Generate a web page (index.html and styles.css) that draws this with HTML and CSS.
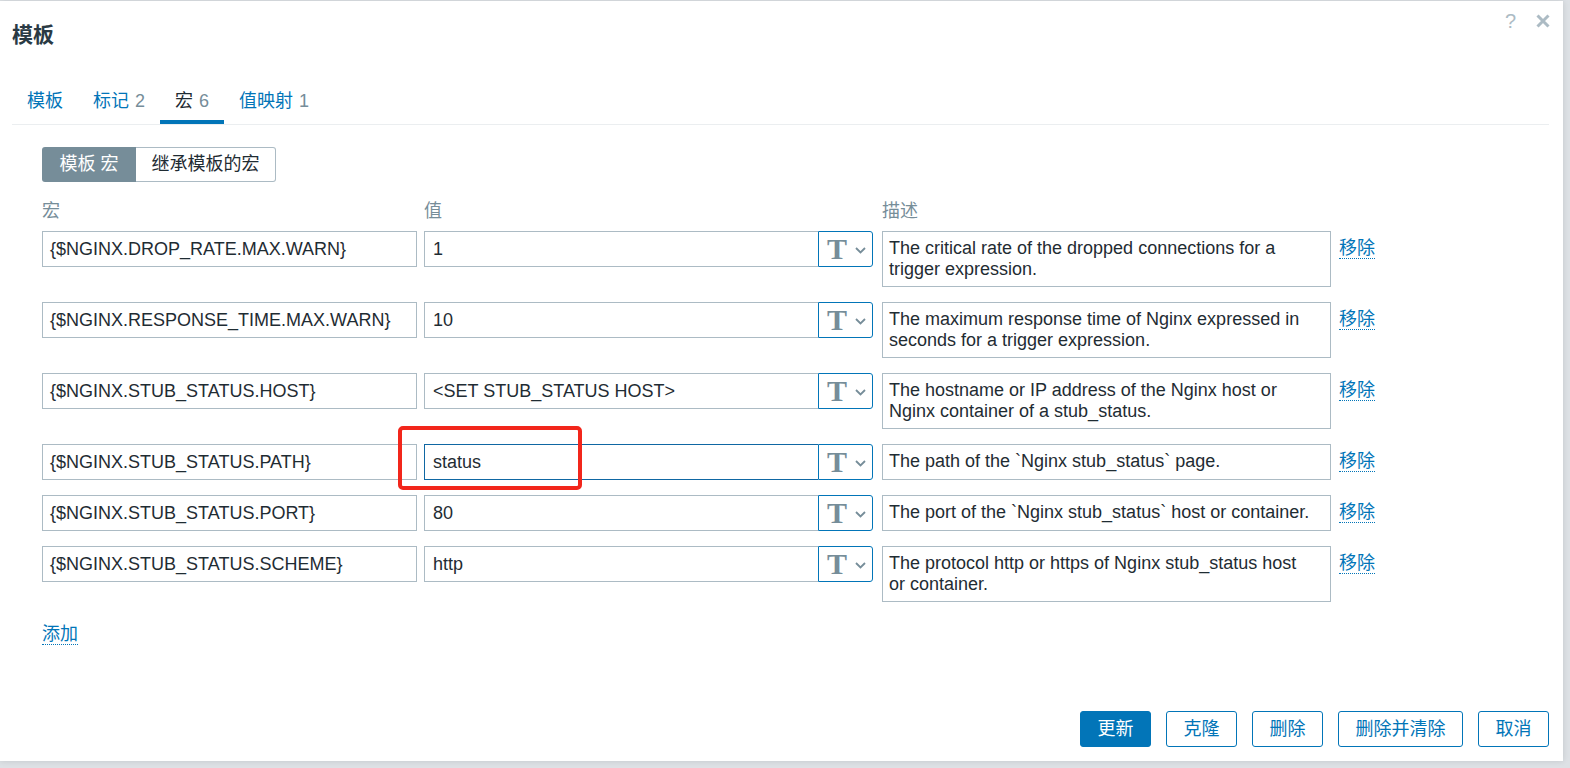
FILE: index.html
```html
<!DOCTYPE html>
<html lang="zh">
<head>
<meta charset="utf-8">
<title>模板</title>
<link rel="stylesheet" href="styles.css">
</head>
<body>
<div class="dialog">
  <div class="dlg-head">
    <h4 class="title">模板</h4>
    <div class="head-btns">
      <span class="help">?</span>
      <svg class="close" width="14" height="14" viewBox="0 0 14 14"><path d="M1.5 1.5 L12.5 12.5 M12.5 1.5 L1.5 12.5" stroke="#acbbc4" stroke-width="3" fill="none"/></svg>
    </div>
  </div>
  <div class="tabs">
    <a class="tab">模板</a>
    <a class="tab">标记 <span class="cnt">2</span></a>
    <a class="tab active">宏 <span class="cnt">6</span></a>
    <a class="tab">值映射 <span class="cnt">1</span></a>
  </div>
  <div class="content">
    <div class="seg"><span class="seg-btn on">模板 宏</span><span class="seg-btn off">继承模板的宏</span></div>
    <div class="thead">
      <div class="c-macro">宏</div>
      <div class="c-val">值</div>
      <div class="c-desc">描述</div>
    </div>

    <div class="row">
      <div class="c-macro"><div class="inp">{$NGINX.DROP_RATE.MAX.WARN}</div></div>
      <div class="c-val"><div class="inp val">1</div><div class="tbtn"><span class="tglyph">T</span><svg class="chev" width="11" height="7" viewBox="0 0 11 7"><path d="M1 1 L5.5 5.5 L10 1" stroke="#768d99" stroke-width="1.8" fill="none"/></svg></div></div>
      <div class="c-desc"><div class="desc">The critical rate of the dropped connections for a<br>trigger expression.</div></div>
      <div class="c-act"><a class="link">移除</a></div>
    </div>

    <div class="row">
      <div class="c-macro"><div class="inp">{$NGINX.RESPONSE_TIME.MAX.WARN}</div></div>
      <div class="c-val"><div class="inp val">10</div><div class="tbtn"><span class="tglyph">T</span><svg class="chev" width="11" height="7" viewBox="0 0 11 7"><path d="M1 1 L5.5 5.5 L10 1" stroke="#768d99" stroke-width="1.8" fill="none"/></svg></div></div>
      <div class="c-desc"><div class="desc">The maximum response time of Nginx expressed in<br>seconds for a trigger expression.</div></div>
      <div class="c-act"><a class="link">移除</a></div>
    </div>

    <div class="row">
      <div class="c-macro"><div class="inp">{$NGINX.STUB_STATUS.HOST}</div></div>
      <div class="c-val"><div class="inp val">&lt;SET STUB_STATUS HOST&gt;</div><div class="tbtn"><span class="tglyph">T</span><svg class="chev" width="11" height="7" viewBox="0 0 11 7"><path d="M1 1 L5.5 5.5 L10 1" stroke="#768d99" stroke-width="1.8" fill="none"/></svg></div></div>
      <div class="c-desc"><div class="desc">The hostname or IP address of the Nginx host or<br>Nginx container of a stub_status.</div></div>
      <div class="c-act"><a class="link">移除</a></div>
    </div>

    <div class="row">
      <div class="c-macro"><div class="inp">{$NGINX.STUB_STATUS.PATH}</div></div>
      <div class="c-val marked"><div class="inp val focus">status</div><div class="tbtn"><span class="tglyph">T</span><svg class="chev" width="11" height="7" viewBox="0 0 11 7"><path d="M1 1 L5.5 5.5 L10 1" stroke="#768d99" stroke-width="1.8" fill="none"/></svg></div><div class="redbox"></div></div>
      <div class="c-desc"><div class="desc">The path of the `Nginx stub_status` page.</div></div>
      <div class="c-act"><a class="link">移除</a></div>
    </div>

    <div class="row">
      <div class="c-macro"><div class="inp">{$NGINX.STUB_STATUS.PORT}</div></div>
      <div class="c-val"><div class="inp val">80</div><div class="tbtn"><span class="tglyph">T</span><svg class="chev" width="11" height="7" viewBox="0 0 11 7"><path d="M1 1 L5.5 5.5 L10 1" stroke="#768d99" stroke-width="1.8" fill="none"/></svg></div></div>
      <div class="c-desc"><div class="desc">The port of the `Nginx stub_status` host or container.</div></div>
      <div class="c-act"><a class="link">移除</a></div>
    </div>

    <div class="row last">
      <div class="c-macro"><div class="inp">{$NGINX.STUB_STATUS.SCHEME}</div></div>
      <div class="c-val"><div class="inp val">http</div><div class="tbtn"><span class="tglyph">T</span><svg class="chev" width="11" height="7" viewBox="0 0 11 7"><path d="M1 1 L5.5 5.5 L10 1" stroke="#768d99" stroke-width="1.8" fill="none"/></svg></div></div>
      <div class="c-desc"><div class="desc">The protocol http or https of Nginx stub_status host<br>or container.</div></div>
      <div class="c-act"><a class="link">移除</a></div>
    </div>

    <div class="add-wrap"><a class="link">添加</a></div>
  </div>
  <div class="footer">
    <button class="btn primary">更新</button>
    <button class="btn">克隆</button>
    <button class="btn">删除</button>
    <button class="btn">删除并清除</button>
    <button class="btn">取消</button>
  </div>
</div>
</body>
</html>
```

FILE: styles.css
```css
html, body {
  margin: 0;
  padding: 0;
}
body {
  width: 1570px;
  height: 768px;
  overflow: hidden;
  background: #dde1e5;
  font-family: "Liberation Sans", Arial, "Noto Sans CJK SC", sans-serif;
  font-size: 18px;
  color: #1f2c33;
}
.dialog {
  margin-top: 1px;
  width: 1563px;
  height: 760px;
  background: #fff;
  display: flex;
  flex-direction: column;
  box-sizing: border-box;
  box-shadow: 0 0 6px rgba(0, 0, 0, 0.12);
}
.dlg-head {
  display: flex;
  height: 79px;
  padding: 0 13px 0 12px;
  box-sizing: border-box;
}
.title {
  flex: 1;
  margin: 22px 0 0;
  font-size: 21px;
  line-height: 24px;
  font-weight: bold;
  color: #2a3a44;
}
.head-btns {
  display: flex;
  align-items: flex-start;
}
.help {
  margin-top: 10px;
  font-size: 20px;
  line-height: 20px;
  color: #acbbc4;
}
.close {
  margin-top: 13px;
  margin-left: 20px;
}
.tabs {
  display: flex;
  margin: 0 14px 0 12px;
  border-bottom: 1px solid #ebeef0;
}
.tab {
  display: block;
  padding: 11px 15px 8px;
  line-height: 21px;
  border-bottom: 4px solid transparent;
  color: #0275b8;
  cursor: pointer;
}
.tab .cnt {
  color: #768d99;
  padding-left: 1px;
}
.tab.active {
  color: #1f2c33;
  border-bottom-color: #0275b8;
}
.content {
  padding: 22px 0 0 42px;
}
.seg {
  display: flex;
  height: 35px;
}
.seg-btn {
  display: block;
  line-height: 33px;
  box-sizing: border-box;
  height: 35px;
}
.seg-btn.on {
  background: #768d99;
  color: #fff;
  padding: 1px 17.5px 0;
  border-radius: 3px 0 0 3px;
}
.seg-btn.off {
  border: 1px solid #acbbc4;
  border-left: none;
  padding: 0 15.5px;
  border-radius: 0 3px 3px 0;
  color: #1f2c33;
}
.thead {
  display: flex;
  padding-top: 18px;
  line-height: 22px;
  margin-bottom: 9px;
  color: #768d99;
}
.row {
  display: flex;
  align-items: flex-start;
  margin-bottom: 15px;
}
.row.last {
  margin-bottom: 0;
}
.c-macro {
  width: 375px;
  flex: none;
}
.c-val {
  width: 449px;
  margin-left: 7px;
  flex: none;
  display: flex;
  position: relative;
}
.c-desc {
  width: 449px;
  margin-left: 9px;
  flex: none;
}
.c-act {
  margin-left: 8px;
  padding-top: 7px;
  line-height: 21px;
}
.inp {
  height: 36px;
  box-sizing: border-box;
  border: 1px solid #acbbc4;
  padding: 0 7px;
  line-height: 34px;
  white-space: nowrap;
  overflow: hidden;
  color: #1f2c33;
}
.inp.val {
  flex: 1;
  border-right: none;
  padding-left: 8px;
}
.inp.focus {
  border-color: #0f67a3;
}
.tbtn {
  width: 55px;
  height: 36px;
  box-sizing: border-box;
  flex: none;
  border: 1px solid #0275b8;
  border-radius: 0 3px 3px 0;
  display: flex;
  align-items: center;
  padding-left: 8px;
}
.tglyph {
  font-family: "Liberation Serif", "Times New Roman", serif;
  font-weight: bold;
  font-size: 30px;
  line-height: 30px;
  color: #768d99;
  width: 21px;
}
.chev {
  margin-left: 7px;
  margin-top: 2px;
}
.desc {
  min-height: 36px;
  box-sizing: border-box;
  border: 1px solid #acbbc4;
  padding: 6px 7px 6px 6px;
  line-height: 21px;
  white-space: nowrap;
  overflow: hidden;
  color: #1f2c33;
}
.link {
  color: #0275b8;
  border-bottom: 1px dotted #0275b8;
  cursor: pointer;
}
.add-wrap {
  margin-top: 22px;
  line-height: 21px;
}
.redbox {
  position: absolute;
  left: -26px;
  top: -18px;
  width: 184px;
  height: 64px;
  box-sizing: border-box;
  border: 4px solid #f2261b;
  border-radius: 5px;
  pointer-events: none;
}
.footer {
  margin-top: auto;
  display: flex;
  justify-content: flex-end;
  gap: 15px;
  padding: 0 14px 14px;
}
.btn {
  height: 36px;
  box-sizing: border-box;
  padding: 0 16.5px;
  border: 1px solid #0275b8;
  border-radius: 3px;
  background: #fff;
  color: #0275b8;
  font-family: "Liberation Sans", Arial, "Noto Sans CJK SC", sans-serif;
  font-size: 18px;
  line-height: 34px;
}
.btn.primary {
  background: #0275b8;
  color: #fff;
}
```
